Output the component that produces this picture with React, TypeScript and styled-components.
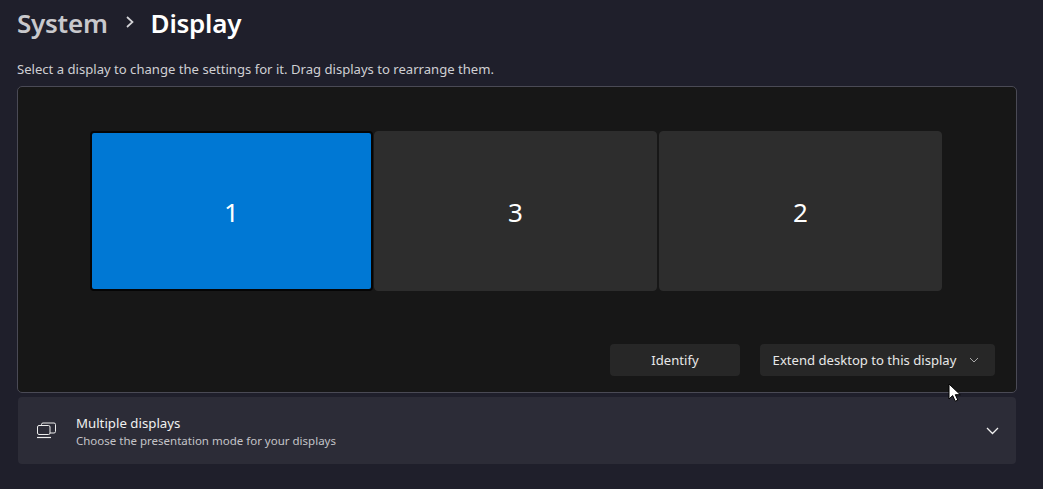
import React from "react";
import styled, { createGlobalStyle } from "styled-components";

const Global = createGlobalStyle`
  html, body { margin: 0; padding: 0; background: #1f1f2b; }
  body { font-family: "Noto Sans", "Open Sans", "Liberation Sans", sans-serif; color: #fff; overflow: hidden; }
  #root { width: 1043px; height: 489px; }
`;

const Page = styled.main`
  position: relative;
  width: 1043px;
  height: 489px;
  box-sizing: border-box;
  padding: 0 26px 0 17px;
  background: #1f1f2b;
  overflow: hidden;
`;

const Breadcrumb = styled.header`
  display: flex;
  align-items: center;
  height: 46px;
  font-size: 26px;
  font-weight: 600;
  letter-spacing: -0.25px;
`;

const Crumb = styled.span<{ $current?: boolean }>`
  color: ${(p) => (p.$current ? "#ffffff" : "#c8c8cc")};
`;

const CrumbChevron = styled.svg`
  width: 12px;
  height: 12px;
  margin: 0 15px 2px 16px;
  fill: none;
  stroke: #d4d4d8;
  stroke-width: 1.7;
`;

const Caption = styled.p`
  margin: 14px 0 8px;
  height: 18px;
  font-size: 13.1px;
  line-height: 18px;
  color: #cfcfd3;
`;

const Arrangement = styled.section`
  width: 1000px;
  height: 307px;
  box-sizing: border-box;
  border: 1px solid #4a4a55;
  border-radius: 5px;
  background: #171717;
  padding: 44px 21px 0 72px;
`;

const DisplayRow = styled.div`
  display: flex;
  gap: 1px;
  & > :last-child { margin-left: 1px; }
`;

const Monitor = styled.div<{ $active?: boolean }>`
  width: 283px;
  height: 160px;
  box-sizing: border-box;
  display: flex;
  align-items: center;
  justify-content: center;
  padding-top: 2px;
  border-radius: 4px;
  border: ${(p) => (p.$active ? "2px solid #050505" : "1px solid #2d2d2d")};
  background: ${(p) => (p.$active ? "#0078d4" : "#2d2d2d")};
  font-size: 26px;
  color: #fff;
`;

const Actions = styled.div`
  display: flex;
  justify-content: flex-end;
  gap: 20px;
  margin-top: 53px;
`;

const ActionButton = styled.button<{ $width: number }>`
  width: ${(p) => p.$width}px;
  height: 32px;
  box-sizing: border-box;
  display: flex;
  align-items: center;
  justify-content: center;
  gap: 13px;
  padding: 0;
  border: none;
  border-radius: 4px;
  background: #272727;
  color: #e8e8e8;
  font-family: inherit;
  font-size: 13.1px;
`;

const SmallChevron = styled.svg`
  width: 10px;
  height: 10px;
  margin-right: 3px;
  fill: none;
  stroke: #a8a8a8;
  stroke-width: 1;
`;

const SettingCard = styled.section`
  display: flex;
  align-items: center;
  width: 998px;
  height: 67px;
  box-sizing: border-box;
  margin: 4px 0 0 1px;
  padding: 0 17px 0 19px;
  border-radius: 4px;
  background: #2c2c37;
`;

const CardIcon = styled.svg`
  width: 20px;
  height: 18px;
  flex: none;
  margin-bottom: 1px;
  fill: none;
  stroke: #ececec;
  stroke-width: 1;
`;

const CardText = styled.div`
  flex: 1;
  margin: 1px 0 0 19px;
`;

const CardTitle = styled.div`
  font-size: 13.25px;
  line-height: 18px;
  color: #f0f0f0;
`;

const CardSubtitle = styled.div`
  font-size: 11.5px;
  line-height: 17px;
  color: #c4c4c8;
`;

const CardChevron = styled.svg`
  width: 13px;
  height: 13px;
  fill: none;
  stroke: #f0f0f0;
  stroke-width: 1.3;
`;

const Cursor = styled.svg`
  position: absolute;
  left: 948px;
  top: 383px;
  width: 14px;
  height: 20px;
`;

export default function App() {
  return (
    <Page>
      <Global />
      <Breadcrumb>
        <Crumb>System</Crumb>
        <CrumbChevron viewBox="0 0 12 12"><path d="M3 1l5.5 5L3 11" /></CrumbChevron>
        <Crumb $current>Display</Crumb>
      </Breadcrumb>
      <Caption>Select a display to change the settings for it. Drag displays to rearrange them.</Caption>
      <Arrangement>
        <DisplayRow>
          <Monitor $active>1</Monitor>
          <Monitor>3</Monitor>
          <Monitor>2</Monitor>
        </DisplayRow>
        <Actions>
          <ActionButton $width={130}>Identify</ActionButton>
          <ActionButton $width={235}>
            Extend desktop to this display
            <SmallChevron viewBox="0 0 10 10"><path d="M1 3l4 4 4-4" /></SmallChevron>
          </ActionButton>
        </Actions>
      </Arrangement>
      <SettingCard>
        <CardIcon viewBox="0 0 20 18">
          <path d="M2 4.5h9.5A1.5 1.5 0 0 1 13 6v6a1.5 1.5 0 0 1-1.5 1.5H2A1.5 1.5 0 0 1 .5 12V6A1.5 1.5 0 0 1 2 4.5z" />
          <path d="M4.5 4.5V3.5a1.5 1.5 0 0 1 1.5-1.5h11a1.5 1.5 0 0 1 1.5 1.5v7a1.5 1.5 0 0 1-1.5 1.5h-4" />
          <path d="M0 16.5h14" strokeWidth="1.2" />
        </CardIcon>
        <CardText>
          <CardTitle>Multiple displays</CardTitle>
          <CardSubtitle>Choose the presentation mode for your displays</CardSubtitle>
        </CardText>
        <CardChevron viewBox="0 0 13 13"><path d="M1 4l5.5 5.5L12 4" /></CardChevron>
      </SettingCard>
      <Cursor viewBox="0 0 14 20">
        <path d="M1 1v15l3.7-3.4 2.5 5.6 2.6-1.1-2.5-5.4h5z" fill="#fff" stroke="#000" strokeWidth="1" />
      </Cursor>
    </Page>
  );
}
